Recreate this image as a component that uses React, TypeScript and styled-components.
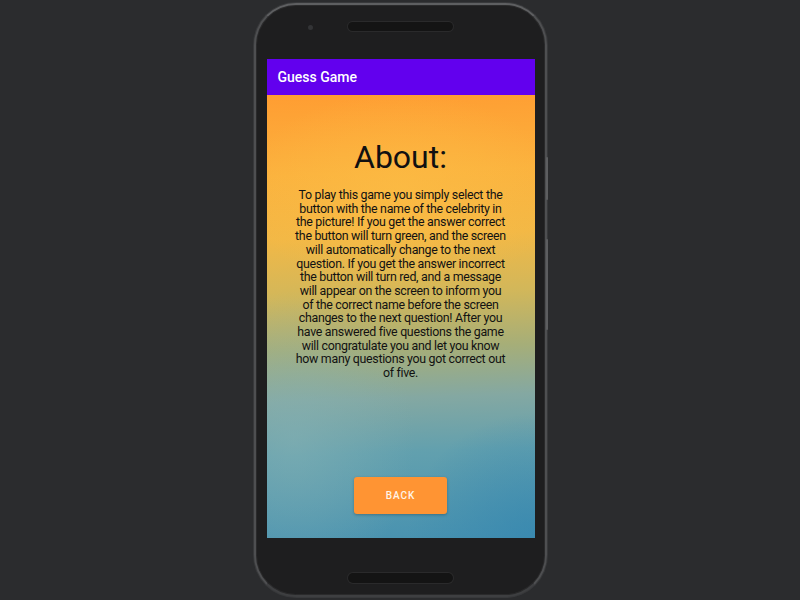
import React from "react";
import styled, { createGlobalStyle } from "styled-components";

const Global = createGlobalStyle`
  html, body { margin: 0; padding: 0; background: #2b2c2e; }
  body { font-family: Roboto, "Noto Sans", sans-serif; }
`;

const Stage = styled.div`
  width: 800px;
  height: 600px;
  display: flex;
  align-items: center;
  justify-content: center;
  background: #2b2c2e;
`;

const Phone = styled.div`
  position: relative;
  width: 293px;
  height: 594px;
  box-sizing: border-box;
  border-radius: 42px;
  background: #1e1e1f;
  border: 2px solid #4e4f51;
  border-top-color: #5e5f61;
  border-bottom-color: #3e3f41;
  box-shadow: inset 0 0 0 1px #2a2a2b, 0 0 0 1px #38393b;
  display: flex;
  flex-direction: column;
  align-items: center;
`;

const TopBezel = styled.div`
  height: 54px;
  width: 100%;
  position: relative;
  display: flex;
  justify-content: center;
  align-items: flex-start;
  padding-top: 17px;
  box-sizing: border-box;
`;

const Camera = styled.div`
  position: absolute;
  left: 52px;
  top: 20px;
  width: 5px;
  height: 5px;
  border-radius: 50%;
  background: #333436;
`;

const Speaker = styled.div`
  width: 105px;
  height: 9px;
  border-radius: 5px;
  background: #141414;
  box-shadow: 0 0 0 1px #2a2a2b;
`;

const Screen = styled.div`
  width: 268px;
  height: 479px;
  margin-left: 1px;
  display: flex;
  flex-direction: column;
  overflow: hidden;
`;

const AppBar = styled.div`
  height: 36px;
  flex: none;
  background: #6200ee;
  color: #fff;
  font-size: 14px;
  font-weight: 500;
  display: flex;
  align-items: center;
  padding-left: 11px;
`;

const Content = styled.div`
  flex: 1;
  display: flex;
  flex-direction: column;
  align-items: center;
  padding: 44px 20px 24px;
  background:
    radial-gradient(ellipse 60% 45% at 10% 78%, rgba(135, 178, 180, 0.55), rgba(135, 178, 180, 0) 75%),
    radial-gradient(ellipse 60% 35% at 100% 100%, rgba(52, 134, 176, 0.7), rgba(52, 134, 176, 0) 80%),
    radial-gradient(ellipse 80% 30% at 50% 22%, rgba(252, 188, 68, 0.7), rgba(252, 188, 68, 0) 75%),
    linear-gradient(178deg, #ff9d32 0%, #fbb23e 18%, #f2b846 32%, #d2b75a 45%, #a6ae78 57%, #84a8a2 68%, #62a0ae 80%, #4892b0 100%);
`;

const Title = styled.h1`
  margin: 0;
  font-size: 32px;
  font-weight: 400;
  color: #111;
  line-height: 36px;
`;

const Body = styled.p`
  width: 213px;
  margin: 13px 0 0;
  font-size: 12.4px;
  letter-spacing: -0.3px;
  line-height: 13.7px;
  color: #121212;
  text-align: center;
`;

const Spacer = styled.div`
  flex: 1;
`;

const Button = styled.button`
  width: 93px;
  height: 37px;
  flex: none;
  border: none;
  border-radius: 3px;
  background: #ff9433;
  color: #fff4e8;
  font-family: Roboto, sans-serif;
  font-size: 10px;
  font-weight: 500;
  letter-spacing: 1px;
  box-shadow: 0 1px 3px rgba(0, 0, 0, 0.25);
`;

const BottomBezel = styled.div`
  flex: 1;
  width: 100%;
  display: flex;
  justify-content: center;
  align-items: flex-end;
  padding-bottom: 12px;
  box-sizing: border-box;
`;

const BottomSpeaker = styled(Speaker)`
  height: 10px;
`;

const SideKey = styled.div<{ $top: number; $h: number }>`
  position: absolute;
  right: -3px;
  top: ${(p) => p.$top}px;
  width: 2px;
  height: ${(p) => p.$h}px;
  border-radius: 1px;
  background: #5d5e60;
`;

export default function App() {
  return (
    <>
      <Global />
      <Stage>
        <Phone>
          <SideKey $top={152} $h={43} />
          <SideKey $top={234} $h={91} />
          <TopBezel>
            <Camera />
            <Speaker />
          </TopBezel>
          <Screen>
            <AppBar>Guess Game</AppBar>
            <Content>
              <Title>About:</Title>
              <Body>
                To play this game you simply select the button with the name of the celebrity in the
                picture! If you get the answer correct the button will turn green, and the screen will
                automatically change to the next question. If you get the answer incorrect the button
                will turn red, and a message will appear on the screen to inform you of the correct name
                before the screen changes to the next question! After you have answered five questions
                the game will congratulate you and let you know how many questions you got correct out
                of five.
              </Body>
              <Spacer />
              <Button>BACK</Button>
            </Content>
          </Screen>
          <BottomBezel>
            <BottomSpeaker />
          </BottomBezel>
        </Phone>
      </Stage>
    </>
  );
}
